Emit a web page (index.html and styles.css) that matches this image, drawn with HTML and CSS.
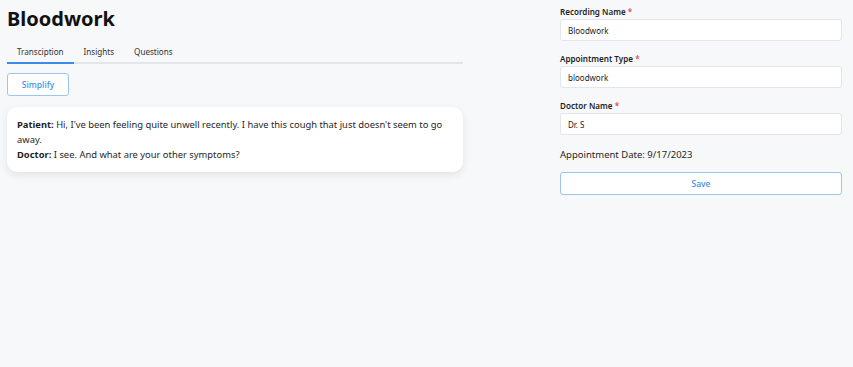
FILE: index.html
```html
<!DOCTYPE html>
<html lang="en">
<head>
    <meta charset="UTF-8">
    <meta name="viewport" content="width=device-width, initial-scale=1.0">
    <title>Bloodwork</title>
    <link rel="stylesheet" href="styles.css">
</head>
<body>
    <div class="page">
        <section class="left">
            <h1 class="title">Bloodwork</h1>
            <nav class="tabs">
                <span class="tab active">Transciption</span>
                <span class="tab">Insights</span>
                <span class="tab">Questions</span>
            </nav>
            <button class="btn simplify">Simplify</button>
            <div class="card">
                <p><b>Patient:</b> Hi, I've been feeling quite unwell recently. I have this cough that just doesn't seem to go away.</p>
                <p><b>Doctor:</b> I see. And what are your other symptoms?</p>
            </div>
        </section>
        <aside class="right">
            <label class="field">
                <span class="label">Recording Name <i>*</i></span>
                <input type="text" value="Bloodwork">
            </label>
            <label class="field">
                <span class="label">Appointment Type <i>*</i></span>
                <input type="text" value="bloodwork">
            </label>
            <label class="field">
                <span class="label">Doctor Name <i>*</i></span>
                <input type="text" value="Dr. S">
            </label>
            <p class="date">Appointment Date: 9/17/2023</p>
            <button class="btn save">Save</button>
        </aside>
    </div>
</body>
</html>
```

FILE: styles.css
```css
/* Recording detail page */
body {
    font-family: "Noto Sans", "Open Sans", sans-serif;
    margin: 0;
    background-color: #f7f8fa;
    color: #1f1f1f;
}
.page {
    display: flex;
    padding: 0 11px 0 7px;
    gap: 97px;
}
.left {
    width: 456px;
}
.right {
    flex: 1;
    padding-top: 6px;
}
.title {
    font-size: 20px;
    font-weight: 700;
    margin: 6px 0 12px;
    line-height: 26px;
    color: #111;
}
.tabs {
    display: flex;
    border-bottom: 2px solid #e3e5ea;
    margin-bottom: 9px;
}
.tab {
    font-size: 8.1px;
    line-height: 12px;
    padding: 2px 10px 4px;
    margin-bottom: -2px;
    border-bottom: 2px solid transparent;
    color: #333;
}
.tab.active {
    border-bottom-color: #3b8beb;
}
.btn {
    display: block;
    font-family: inherit;
    background: #fff;
    border: 1px solid #9cc4f3;
    border-radius: 3px;
    color: #3b8beb;
    font-size: 8.5px;
    font-weight: 500;
    height: 23px;
    cursor: pointer;
}
.simplify {
    width: 62px;
}
.card {
    background: #fff;
    border-radius: 10px;
    box-shadow: 0 3px 8px rgba(0, 0, 0, 0.09);
    margin-top: 11px;
    padding: 10px 8px 10px 10px;
    font-size: 9.4px;
    line-height: 15px;
}
.card p {
    margin: 0;
}
.field {
    display: block;
    margin-bottom: 12px;
}
.label {
    display: block;
    font-size: 8.1px;
    font-weight: 600;
    line-height: 12px;
    margin-bottom: 1px;
}
.label i {
    font-style: normal;
    color: #e5484d;
}
input {
    display: block;
    box-sizing: border-box;
    width: 100%;
    height: 22px;
    border: 1px solid #e3e5ea;
    border-radius: 3px;
    background: #fff;
    padding: 0 7px;
    font-family: inherit;
    font-size: 8px;
    color: #222;
}
.date {
    font-size: 9.5px;
    margin: 0 0 9px;
    line-height: 16px;
}
.save {
    width: 100%;
}
```
